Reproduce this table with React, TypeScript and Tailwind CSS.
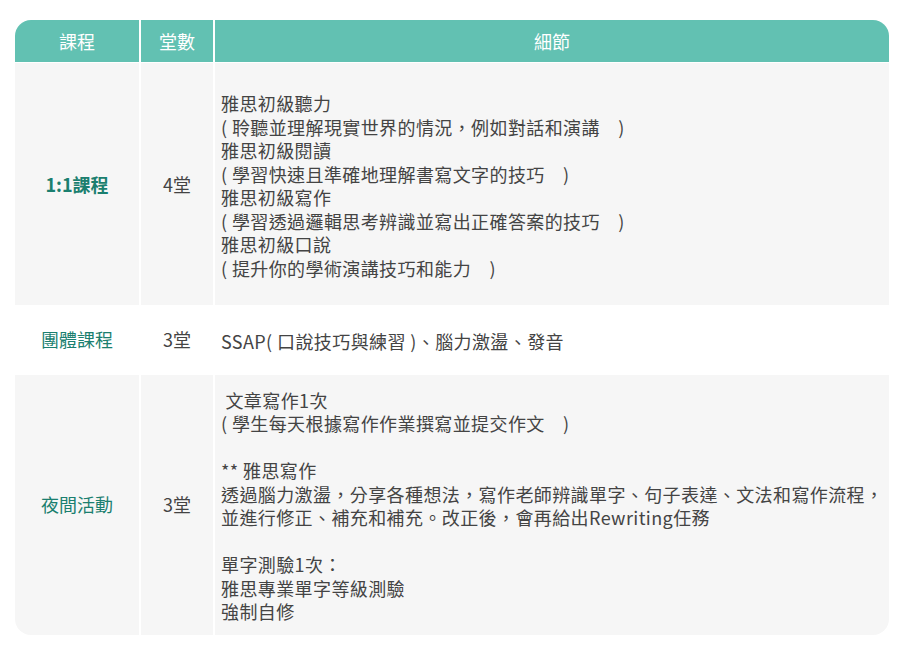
import React from "react";

const font = {
  fontFamily: '"Noto Sans CJK TC", "Noto Sans", sans-serif',
};

function Row({
  name,
  bold,
  count,
  lines,
  bg,
  pad,
}: {
  name: string;
  bold?: boolean;
  count: string;
  lines: string[];
  bg: string;
  pad: string;
}) {
  return (
    <div className="grid grid-cols-[124px_72px_1fr] gap-x-[2px]">
      <div
        className={`${bg} flex items-center justify-center text-[18px] text-[#1b7f6f] ${
          bold ? "font-bold" : "font-normal"
        }`}
      >
        {name}
      </div>
      <div className={`${bg} flex items-center justify-center text-[18px] text-[#444444]`}>
        {count}
      </div>
      <div
        className={`${bg} ${pad} pl-[6px] pr-[4px] text-[18px] leading-[23.5px] tracking-[0.4px] text-[#444444]`}
      >
        {lines.map((l, i) => (
          <div key={i} className="whitespace-pre min-h-[23.5px]">
            {l}
          </div>
        ))}
      </div>
    </div>
  );
}

export default function App() {
  return (
    <div className="w-[900px] h-[649px] bg-white pl-[15px] pr-[11px] pt-[20px]" style={font}>
      <div className="rounded-2xl overflow-hidden flex flex-col gap-y-[1px] bg-white">
        <div className="grid grid-cols-[124px_72px_1fr] gap-x-[2px] h-[42px]">
          <div className="bg-[#62c1b2] flex items-center justify-center text-white text-[18px]">課程</div>
          <div className="bg-[#62c1b2] flex items-center justify-center text-white text-[18px]">堂數</div>
          <div className="bg-[#62c1b2] flex items-center justify-center text-white text-[18px]">細節</div>
        </div>
        <div className="flex flex-col">
          <Row
            name="1:1課程"
            bold
            count="4堂"
            bg="bg-[#f6f6f6]"
            pad="pt-[29px] pb-[25px]"
            lines={[
              "雅思初級聽力",
              "( 聆聽並理解現實世界的情況，例如對話和演講\u3000)",
              "雅思初級閱讀",
              "( 學習快速且準確地理解書寫文字的技巧\u3000)",
              "雅思初級寫作",
              "( 學習透過邏輯思考辨識並寫出正確答案的技巧\u3000)",
              "雅思初級口說",
              "( 提升你的學術演講技巧和能力\u3000)",
            ]}
          />
          <Row
            name="團體課程"
            count="3堂"
            bg="bg-white"
            pad="pt-[25px] pb-[21px]"
            lines={["SSAP( 口說技巧與練習 )、腦力激盪、發音"]}
          />
          <Row
            name="夜間活動"
            count="3堂"
            bg="bg-[#f6f6f6]"
            pad="pt-[14px] pb-[11px]"
            lines={[
              " 文章寫作1次",
              "( 學生每天根據寫作作業撰寫並提交作文\u3000)",
              "",
              "** 雅思寫作",
              "透過腦力激盪，分享各種想法，寫作老師辨識單字、句子表達、文法和寫作流程，",
              "並進行修正、補充和補充。改正後，會再給出Rewriting任務",
              "",
              "單字測驗1次：",
              "雅思專業單字等級測驗",
              "強制自修",
            ]}
          />
        </div>
      </div>
    </div>
  );
}
